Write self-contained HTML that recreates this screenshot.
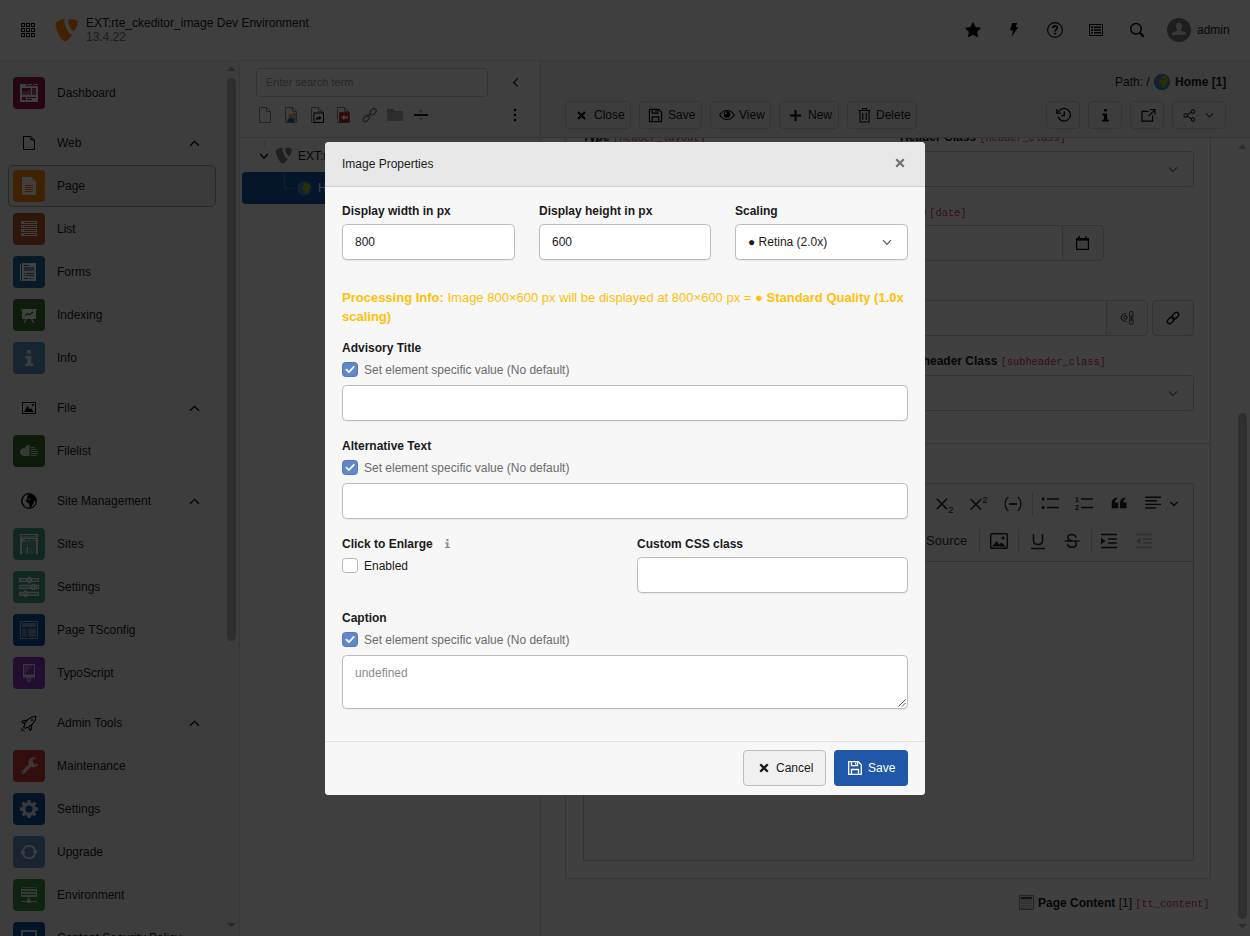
<!DOCTYPE html>
<html lang="en">
<head>
<meta charset="utf-8">
<title>TYPO3 Image Properties</title>
<style>
*{box-sizing:border-box;margin:0;padding:0}
html,body{width:1250px;height:936px;overflow:hidden;background:#fff}
body{font-family:"Liberation Sans",sans-serif;font-size:12px;color:#1a1a1a;line-height:1.5}
#app{position:relative;width:1250px;height:936px;overflow:hidden;background:#fff}
.abs{position:absolute}
svg{display:block}
/* ---------- topbar ---------- */
.topbar{position:absolute;left:0;top:0;width:1250px;height:61px;background:#fbfbfb;border-bottom:1px solid #e3e3e3}
.topbar .title{position:absolute;left:86px;top:16px;font-size:12px;line-height:14px;color:#1a1a1a}
.topbar .title span{display:block;color:#737373}
.tb-ic{position:absolute;top:22px;width:16px;height:16px}
/* ---------- sidebar ---------- */
.sidebar{position:absolute;left:0;top:61px;width:240px;height:875px;background:#f4f4f4;border-right:1px solid #d9d9d9}
.mod{position:absolute;left:13px;width:200px;height:32px}
.mod .ic{position:absolute;left:0;top:0;width:32px;height:32px;border-radius:4px}
.mod .ic svg{position:absolute;left:8px;top:8px;width:16px;height:16px}
.mod .lb{position:absolute;left:44px;top:7px;line-height:18px;font-size:12px;color:#1a1a1a;white-space:nowrap}
.grp .ic{background:none}
.mod.grp .ic svg{left:0;top:0}
.grp .chev{position:absolute;left:176px;top:11px;width:11px;height:11px}
.mod.active::before{content:"";box-sizing:border-box;position:absolute;left:-5px;top:-5px;width:207.5px;height:41.5px;border:1px solid #a0a0a0;border-radius:5px;background:#e9e9e9}
/* ---------- overlay ---------- */
.overlay{position:absolute;left:0;top:0;width:1250px;height:936px;background:rgba(0,0,0,.75)}
/* ---------- modal ---------- */
.modal{position:absolute;left:325px;top:142px;width:600px;height:653px;background:#f7f7f7;border-radius:4px;overflow:hidden}
.modal .mh{position:absolute;left:0;top:0;width:600px;height:45px;background:#e8e8e8;border-bottom:1px solid #d0d0d0}
.modal .mh .t{position:absolute;left:17px;top:13px;font-size:12px;line-height:18px;color:#1a1a1a}
.modal .mf{position:absolute;left:0;top:599px;width:600px;height:54px;border-top:1px solid #e3e3e3;background:#f7f7f7}
.lbl{position:absolute;font-weight:bold;font-size:12px;line-height:18px;color:#1a1a1a;white-space:nowrap}
.inp{position:absolute;height:35px;background:#fff;border:1px solid #bcbcbc;border-radius:4.5px;font-size:12px;line-height:33px;padding-left:12px;color:#1a1a1a;box-shadow:0 1px 1px rgba(0,0,0,.06)}
.cb{position:absolute;width:16px;height:15px;border-radius:3.5px}
.cb.on{background:#6189c9;border:1px solid #5179ba}
.cb.off{background:#fff;border:1px solid #b4b4b4}
.cbl{position:absolute;font-size:12px;line-height:18px;white-space:nowrap;color:#6b6b6b}
.pinfo{position:absolute;left:17px;top:146px;width:570px;font-size:13px;line-height:19px;color:#ffc107}
.btn-c{position:absolute;left:418px;top:8px;width:83px;height:36px;background:#f0f0f0;border:1px solid #bdbdbd;border-radius:4px;font-size:12px;color:#1a1a1a}
.btn-c span{position:absolute;left:32px;top:8px;line-height:18px}
.btn-s{position:absolute;left:509px;top:8px;width:74px;height:36px;background:#2057a8;border-radius:4px;font-size:12px;color:#fff}
.btn-s span{position:absolute;left:34px;top:9px;line-height:18px}
.dbtn{position:absolute;background:#f4f4f4;border:1px solid #d0d0d0;border-radius:4px;font-size:12px}
.flab{position:absolute;font-size:12px;line-height:18px;font-weight:bold;color:#1a1a1a;white-space:nowrap}
code{font-family:"Liberation Mono",monospace;font-size:10.3px;font-weight:normal;color:#d63384}
.fin{position:absolute;background:#fff;border:1px solid #ccc;border-radius:4px}
.fbtn{background:#f6f6f6}
</style>
</head>
<body>
<div id="app">

<!-- TOPBAR -->
<div class="topbar" id="topbar">
  <svg class="abs" style="left:21px;top:23px" width="14" height="14" viewBox="0 0 14 14" fill="none" stroke="#000" stroke-width="1"><rect x="0.5" y="0.5" width="3" height="3"/><rect x="5.5" y="0.5" width="3" height="3"/><rect x="10.5" y="0.5" width="3" height="3"/><rect x="0.5" y="5.5" width="3" height="3"/><rect x="5.5" y="5.5" width="3" height="3"/><rect x="10.5" y="5.5" width="3" height="3"/><rect x="0.5" y="10.5" width="3" height="3"/><rect x="5.5" y="10.5" width="3" height="3"/><rect x="10.5" y="10.5" width="3" height="3"/></svg>
  <svg class="abs" style="left:53.2px;top:16.8px" width="26.5" height="26.5" viewBox="0 0 16 16"><path fill="#FF8700" d="M11.6 10.385c-.2.06-.358.08-.567.08-1.708 0-4.217-5.970-4.217-7.957 0-.732.174-.976.418-1.185C5.143 1.566 2.634 2.333 1.832 3.310c-.174.244-.279.628-.279 1.115C1.553 7.528 4.865 14.570 7.2 14.570c1.082 0 2.905-1.778 4.4-4.185M10.512 1.430c2.161 0 4.325.349 4.325 1.569 0 2.475-1.569 5.474-2.371 5.474-1.429 0-3.207-3.974-3.207-5.962 0-.906.349-1.081 1.253-1.081"/></svg>
  <div class="title">EXT:rte_ckeditor_image Dev Environment<span>13.4.22</span></div>
  <!-- star -->
  <svg class="abs" style="left:965px;top:22px" width="16" height="16" viewBox="0 0 16 16"><path d="M8 1.2 L10.1 5.6 L14.9 6.2 L11.4 9.6 L12.3 14.4 L8 12 L3.7 14.4 L4.6 9.6 L1.1 6.2 L5.9 5.6 Z" fill="#000" stroke="#000" stroke-width="1.4" stroke-linejoin="round"/></svg>
  <!-- bolt -->
  <svg class="abs" style="left:1006px;top:22px" width="16" height="16" viewBox="0 0 16 16"><path d="M6.3 1 H11.2 L9.6 5.2 H12.3 L5.4 15 L7.2 8.6 H4 Z" fill="#000"/></svg>
  <!-- help -->
  <svg class="abs" style="left:1047px;top:22px" width="16" height="16" viewBox="0 0 16 16"><circle cx="8" cy="8" r="7.4" fill="none" stroke="#000" stroke-width="1.1"/><path d="M5.7 6.3 C5.7 4.9 6.7 4.1 8 4.1 C9.4 4.1 10.3 5 10.3 6.1 C10.3 7.6 8 7.8 8 9.6" fill="none" stroke="#000" stroke-width="1.6"/><rect x="7.1" y="10.7" width="1.8" height="1.8" fill="#000"/></svg>
  <!-- list -->
  <svg class="abs" style="left:1089px;top:24px" width="14" height="12" viewBox="0 0 14 12"><rect x=".5" y=".5" width="13" height="11" fill="none" stroke="#000" stroke-width="1"/><path d="M2 2.5h2v1.6h-2z M5 2.5h7v1.6h-7z M2 5.2h2v1.6h-2z M5 5.2h7v1.6h-7z M2 7.9h2v1.6h-2z M5 7.9h7v1.6h-7z" fill="#000"/></svg>
  <!-- search -->
  <svg class="abs" style="left:1129px;top:22px" width="16" height="16" viewBox="0 0 16 16"><circle cx="7" cy="6.8" r="5.3" fill="none" stroke="#000" stroke-width="1.5"/><path d="M10.9 10.8 L14.8 14.8" stroke="#000" stroke-width="2" /></svg>
  <!-- avatar -->
  <svg class="abs" style="left:1167px;top:18px" width="24" height="24" viewBox="0 0 24 24"><circle cx="12" cy="12" r="12" fill="#787878"/><path d="M12 4.6c-2 0-3.100 1.500-3.100 3.500 0 1.400.5 2.600 1.300 3.300v1.300l-3.900 1.400c-.7.300-1.200.9-1.300 1.700l-.2 1.200h14.400l-.2-1.200c-.1-.8-.6-1.400-1.300-1.700l-3.900-1.400v-1.300c.8-.7 1.300-1.900 1.300-3.300 0-2-1.100-3.500-3.100-3.500z" fill="#dcdcdc"/></svg>
  <div class="abs" style="left:1197px;top:21px;line-height:18px;font-size:12px;color:#1a1a1a">admin</div>
</div>

<!-- SIDEBAR -->
<div class="sidebar" id="sidebar">
<div class="mod" style="top:16px"><div class="ic" style="background:#96175a"><svg style="left:0;top:0;width:32px;height:32px" viewBox="0 0 32 32"><path d="M7 7h6v2h12v16H7z" fill="#fff"/><path d="M14 7h5v1h-5zM20 7h5v1h-5z" fill="#fff"/>
<path d="M9 11h9v7H9z M19 11h4v7h-4z M9 20h4v3H9z M14 20h9v1h-9z M14 22h5v1h-5z" fill="#96175a"/>
<path d="M9 18v-3l2-1 2 1 3-2 2-1v6z" fill="#fff" opacity=".35"/><path d="M19 12h4v6h-4z" fill="#fff" opacity=".25"/></svg></div><div class="lb">Dashboard</div></div>
<div class="mod grp" style="top:66px"><div class="ic" style="left:8px;top:8px;width:16px;height:16px"><svg width="16" height="16" viewBox="0 0 16 16"><path d="M2.5 1.500h7.500l3.5 3.500v9.500h-11z" fill="none" stroke="#000" stroke-width="1"/><path d="M10 1.500v3.500h3.5" fill="none" stroke="#000" stroke-width="1"/></svg></div><div class="lb">Web</div><svg class="chev" viewBox="0 0 11 11"><path d="M1 7.8 L5.5 3.3 L10 7.8" fill="none" stroke="#000" stroke-width="1.3"/></svg></div>
<div class="mod active" style="top:109px"><div class="ic" style="background:#ff8700"><svg style="left:0;top:0;width:32px;height:32px" viewBox="0 0 32 32"><path d="M9 7h10l4 4v14H9z" fill="#fff"/><path d="M19 7l4 4h-4z" fill="#ff8700" opacity=".45"/>
<path d="M12 15h8v1h-8zM12 17h8v1h-8zM12 19h8v1h-8zM12 21h8v1h-8z" fill="#ff8700"/></svg></div><div class="lb">Page</div></div>
<div class="mod" style="top:152px"><div class="ic" style="background:#c0562a"><svg style="left:0;top:0;width:32px;height:32px" viewBox="0 0 32 32"><path d="M8 8h16v3H8z" fill="#fff"/><path d="M9 9h1v1H9zM11 9h12v1H11z" fill="#c0562a"/><path d="M8 12h16v3H8z" fill="#fff"/><path d="M9 13h1v1H9zM11 13h12v1H11z" fill="#c0562a"/><path d="M8 16h16v3H8z" fill="#fff"/><path d="M9 17h1v1H9zM11 17h12v1H11z" fill="#c0562a"/><path d="M8 20h16v3H8z" fill="#fff"/><path d="M9 21h1v1H9zM11 21h12v1H11z" fill="#c0562a"/></svg></div><div class="lb">List</div></div>
<div class="mod" style="top:195px"><div class="ic" style="background:#23639c"><svg style="left:0;top:0;width:32px;height:32px" viewBox="0 0 32 32"><path d="M7 8h1v17H7z" fill="#fff"/><path d="M9 7h14v18H9z" fill="#fff"/>
<path d="M11 9h5v1h-5z M11 11h10v4H11z M11 17h1v1h-1z M13 17h8v1h-8z M11 19h1v1h-1z M13 19h8v1h-8z M11 22h4v1h-4z M16 22h4v1h-4z" fill="#23639c"/>
<path d="M11 11h10v4H11z M16 22h4v1h-4z" fill="#fff" opacity=".4"/></svg></div><div class="lb">Forms</div></div>
<div class="mod" style="top:238px"><div class="ic" style="background:#356f2f"><svg style="left:0;top:0;width:32px;height:32px" viewBox="0 0 32 32"><path d="M8 10h16v1.300H8z" fill="#fff"/><path d="M9 11h14v9H9z" fill="#fff"/>
<path d="M13.5 20 L11 24 M18.5 20 L21 24" stroke="#fff" stroke-width="1.2" fill="none"/>
<path d="M12 16.5 L14.5 14.5 L16.5 15.8 L20 13" stroke="#356f2f" stroke-width="1.1" fill="none"/></svg></div><div class="lb">Indexing</div></div>
<div class="mod" style="top:281px"><div class="ic" style="background:#5c94cc"><svg style="left:0;top:0;width:32px;height:32px" viewBox="0 0 32 32"><path d="M14 8h4v3.500h-4z M12.2 14h6v7.500h2v2.500h-8v-2.500h2v-5h-2z" fill="#fff" opacity=".85"/></svg></div><div class="lb">Info</div></div>
<div class="mod grp" style="top:331px"><div class="ic" style="left:8px;top:8px;width:16px;height:16px"><svg width="16" height="16" viewBox="0 0 16 16"><rect x="1.5" y="2.5" width="13" height="11" fill="none" stroke="#000" stroke-width="1"/><path d="M3 11.900L6.5 5.8 8.7 9.3 10.1 8.2 12.9 11.900z" fill="#000"/><rect x="11" y="4" width="1.8" height="1.8" fill="#000"/></svg></div><div class="lb">File</div><svg class="chev" viewBox="0 0 11 11"><path d="M1 7.8 L5.5 3.3 L10 7.8" fill="none" stroke="#000" stroke-width="1.3"/></svg></div>
<div class="mod" style="top:374px"><div class="ic" style="background:#3a6c2c"><svg style="left:0;top:0;width:32px;height:32px" viewBox="0 0 32 32"><path d="M16.5 9.800c-2.6 0-4.3 1.6-4.8 3.6-.3-.1-.6-.1-.9-.1-2.1 0-3.8 1.7-3.8 3.800s1.7 3.8 3.8 3.800h5.700z" fill="#fff" opacity=".8"/>
<path d="M17.6 12h4v1h-4z M17.6 14h6v1h-6z M17.6 16h7.500v1h-7.500z M17.6 18h7.500v1h-7.500z M17.6 20h6v1h-6z" fill="#fff" opacity=".8"/></svg></div><div class="lb">Filelist</div></div>
<div class="mod grp" style="top:424px"><div class="ic" style="left:8px;top:8px;width:16px;height:16px"><svg width="16" height="16" viewBox="0 0 16 16"><circle cx="8" cy="8" r="7.3" fill="none" stroke="#000" stroke-width="1.3"/><path d="M7.6 1.200C9.5 .9 12 1.5 13.3 3C14.6 4.5 15.2 6.3 14.9 8.300L13.6 7.400L12.6 10C11.8 11.5 10.8 12.6 10 15L8.6 14.800C8.4 12.6 8.4 11 7.4 10C6.2 9.8 4.9 9.2 5 7.700C5.1 6.5 6 5.7 7 5.300L6 4.800C6.2 3.4 6.6 2.2 7.6 1.200Z M1 5.500C1.5 4.3 2.6 4.2 2.5 5.200C2.3 6.2 1.8 7 1 7.500Z M1.3 9.600C1.8 10.6 3.3 11 3.5 12.600C2.6 12.8 1.7 11.8 1.3 9.600Z" fill="#000"/><ellipse cx="8.6" cy="6" rx="1.6" ry=".5" fill="#f4f4f4"/></svg></div><div class="lb">Site Management</div><svg class="chev" viewBox="0 0 11 11"><path d="M1 7.8 L5.5 3.3 L10 7.8" fill="none" stroke="#000" stroke-width="1.3"/></svg></div>
<div class="mod" style="top:467px"><div class="ic" style="background:#429c88"><svg style="left:0;top:0;width:32px;height:32px" viewBox="0 0 32 32"><g opacity=".95"><path d="M7.5 6.500h17v2.500h-17z" fill="none" stroke="#fff" stroke-width="1.1"/><rect x="22" y="7.2" width="1.2" height="1.2" fill="#fff"/>
<path d="M7 10h18v16h-2v-15h-14v15h-2z" fill="#fff"/><path d="M9 11.800h4v1.600h-4z M14.2 11.800h1.200v1.600h-1.200z M16.4 11.800h1.200v1.600h-1.200z M19.7 11.800h1.200v1.600h-1.200z M21.7 11.800h1.200v1.600h-1.200z" fill="#fff"/><path d="M13.8 18.500h1.200v7.500h-1.200z" fill="#fff"/></g>
<path d="M9.2 14h13.600v4h-13.600z M9.2 19h4.400v7h-4.400z M15.2 19h7.600v7h-7.600z" fill="#fff" opacity=".2"/></svg></div><div class="lb">Sites</div></div>
<div class="mod" style="top:510px"><div class="ic" style="background:#429c88"><svg style="left:0;top:0;width:32px;height:32px" viewBox="0 0 32 32"><g fill="#fff" fill-opacity=".3" stroke="#fff" stroke-width="1.2" stroke-opacity=".95"><path d="M6.5 7.500h7.500v3h-7.500z M18.5 7.500h7v3h-7z M15.3 6.300h2.100v5.100h-2.100z"/><path d="M6.5 14.300h11.300v3h-11.300z M22.9 14.300h2.600v3h-2.600z M19.2 13.300h2.300v5.200h-2.300z"/><path d="M6.5 21.300h3.500v3h-3.500z M14.6 21.300h10.900v3h-10.900z M11.3 20.200h2.100v5.200h-2.100z"/></g></svg></div><div class="lb">Settings</div></div>
<div class="mod" style="top:553px"><div class="ic" style="background:#104e9c"><svg style="left:0;top:0;width:32px;height:32px" viewBox="0 0 32 32"><path d="M7.5 7.500h17v17h-17z" fill="none" stroke="#fff" stroke-width="1" opacity=".62"/><path d="M9 9h14v4H9z" fill="#fff" opacity=".46"/><path d="M9 14.300h4.800v8.700H9z" fill="#fff" opacity=".3"/><path d="M15.2 14.300h7.800v8.700h-7.800z" fill="#fff" opacity=".4"/></svg></div><div class="lb">Page TSconfig</div></div>
<div class="mod" style="top:596px"><div class="ic" style="background:#8a34c4"><svg style="left:0;top:0;width:32px;height:32px" viewBox="0 0 32 32"><g opacity=".8"><path d="M10.5 7.500h11v10.500h-11z" fill="none" stroke="#fff" stroke-width="1"/><path d="M11.7 8v8.500h.9v-8.500z M13.5 8v7h.8v-7z M15.3 8v5h.7v-5z M17 8v3.500h.6v-3.500z M18.5 8v2h.6v-2z" fill="#fff" opacity=".8"/><path d="M10 18h12v2.700h-12z" fill="#fff"/><path d="M14.5 21.200h3v3h-3z" fill="none" stroke="#fff" stroke-width="1"/></g></svg></div><div class="lb">TypoScript</div></div>
<div class="mod grp" style="top:646px"><div class="ic" style="left:8px;top:8px;width:16px;height:16px"><svg width="16" height="16" viewBox="0 0 16 16"><g fill="none" stroke="#000" stroke-width="1.150" stroke-linejoin="round"><path d="M15 1.200C10.5 1.6 7.6 3.6 5.8 5.400L3.5 8.6 3.8 10.3 2.8 11.6 3.2 12.8 4.6 13.2 5.9 12.3 7.4 12.5 10.6 9.800C12.6 8 14.6 5.3 15 1.200Z"/><path d="M5.8 5.400L2 5.8.6 7.1 3.3 8.6"/><path d="M10.6 9.800L10.4 14 9 15.3 7.4 12.5"/></g><circle cx="11" cy="5" r=".95" fill="#000"/><path d="M0 13h1.100v1.100H0zM1.2 14.100h1.100v1.100H1.200zM0 15.100h1.100v.9H0zM2.3 15.100h1.100v.9H2.300z" fill="#000"/></svg></div><div class="lb">Admin Tools</div><svg class="chev" viewBox="0 0 11 11"><path d="M1 7.8 L5.5 3.3 L10 7.8" fill="none" stroke="#000" stroke-width="1.3"/></svg></div>
<div class="mod" style="top:689px"><div class="ic" style="background:#c83838"><svg style="left:0;top:0;width:32px;height:32px" viewBox="0 0 32 32"><g opacity=".8"><path d="M10.2 22.300L17.4 15.1" stroke="#fff" stroke-width="3.6" stroke-linecap="round" fill="none"/><path d="M23.8 8.600a5 5 0 1 0 1.5 4.800l-3.3 1-2.5-2.4.9-3.200z" fill="#fff"/></g><circle cx="10.3" cy="22.2" r=".8" fill="#c83838"/></svg></div><div class="lb">Maintenance</div></div>
<div class="mod" style="top:732px"><div class="ic" style="background:#104c94"><svg style="left:0;top:0;width:32px;height:32px" viewBox="0 0 32 32"><g opacity=".85"><rect x="14.3" y="7" width="3.4" height="4" transform="rotate(0 16 16)" fill="#fff"/><rect x="14.3" y="7" width="3.4" height="4" transform="rotate(45 16 16)" fill="#fff"/><rect x="14.3" y="7" width="3.4" height="4" transform="rotate(90 16 16)" fill="#fff"/><rect x="14.3" y="7" width="3.4" height="4" transform="rotate(135 16 16)" fill="#fff"/><rect x="14.3" y="7" width="3.4" height="4" transform="rotate(180 16 16)" fill="#fff"/><rect x="14.3" y="7" width="3.4" height="4" transform="rotate(225 16 16)" fill="#fff"/><rect x="14.3" y="7" width="3.4" height="4" transform="rotate(270 16 16)" fill="#fff"/><rect x="14.3" y="7" width="3.4" height="4" transform="rotate(315 16 16)" fill="#fff"/><circle cx="16" cy="16" r="5.2" fill="none" stroke="#fff" stroke-width="3.4"/></g></svg></div><div class="lb">Settings</div></div>
<div class="mod" style="top:775px"><div class="ic" style="background:#658fc8"><svg style="left:0;top:0;width:32px;height:32px" viewBox="0 0 32 32"><g opacity=".95"><path d="M10.2 13.900A6.2 6.2 0 0 1 22.1 14.9" fill="none" stroke="#fff" stroke-width="1.9"/><path d="M19.4 14.600h5.600l-2.8 4.200z" fill="#fff"/><path d="M21.8 18.100A6.2 6.2 0 0 1 9.9 17.1" fill="none" stroke="#fff" stroke-width="1.9"/><path d="M7 17.400h5.600l-2.8-4.200z" fill="#fff"/></g></svg></div><div class="lb">Upgrade</div></div>
<div class="mod" style="top:818px"><div class="ic" style="background:#388a44"><svg style="left:0;top:0;width:32px;height:32px" viewBox="0 0 32 32"><path d="M9 8h14v1H9z" fill="#fff" opacity=".5"/><path d="M8 10h16v8H8z" fill="#fff" opacity=".8"/><path d="M9 12h14v1H9z M9 15h14v1H9z" fill="#388a44"/><path d="M15.5 18v3 M8 22.500h16" stroke="#fff" stroke-width="1.2" opacity=".8"/><path d="M14 20.500h4v3.500h-4z" fill="#fff" opacity=".8"/></svg></div><div class="lb">Environment</div></div>
<div class="mod" style="top:861px"><div class="ic" style="background:#104c94"><svg style="left:0;top:0;width:32px;height:32px" viewBox="0 0 32 32"><path d="M9 9h14v14H9z" fill="none" stroke="#fff" stroke-width="2" opacity=".8"/></svg></div><div class="lb">Content Security Policy</div></div>
<div class="abs" style="left:227px;top:17px;width:9px;height:563px;background:#b8b8b8;border-radius:5px"></div>
<svg class="abs" style="left:227px;top:5px" width="9" height="5" viewBox="0 0 9 5"><path d="M0 5L4.5 .5 9 5z" fill="#a6a6a6"/></svg>
<svg class="abs" style="left:227px;top:862px" width="9" height="5" viewBox="0 0 9 5"><path d="M0 0L4.5 4.5 9 0z" fill="#a6a6a6"/></svg>
</div>

<!-- TREE -->
<div id="tree">
  <div class="abs" style="left:240px;top:61px;width:300px;height:875px;background:#f9f9f9"></div>
  <div class="abs" style="left:256px;top:68px;width:232px;height:29px;background:#fff;border:1px solid #ccc;border-radius:4px;padding-left:9px;line-height:27px;color:#9a9a9a;font-size:11px">Enter search term</div>
  <svg class="abs" style="left:512px;top:77px" width="8" height="11" viewBox="0 0 8 11"><path d="M5.800 1.300 L1.600 5.500 L5.800 9.700" fill="none" stroke="#000" stroke-width="1.100"/></svg>
  <!-- toolbar icons -->
  <svg class="abs" style="left:257px;top:107px" width="16" height="16" viewBox="0 0 16 16"><path d="M2.500 .500h7l4 4v11h-11z" fill="#fff" stroke="#8c8c8c" stroke-width="1"/><path d="M9.500 .500v4h4" fill="none" stroke="#8c8c8c" stroke-width="1"/></svg>
  <svg class="abs" style="left:283px;top:107px" width="16" height="16" viewBox="0 0 16 16"><path d="M2.500 .500h7l4 4v11h-11z" fill="#fff" stroke="#8c8c8c" stroke-width="1"/><path d="M9.500 .500v4h4" fill="none" stroke="#8c8c8c" stroke-width="1"/><circle cx="11.300" cy="7.200" r="1.700" fill="#e8a33a"/><path d="M9.500 14.600v-3.200c0-1.400.8-2.200 2-2.200s2.600.8 2.900 2.400v3z" fill="#8fb0d6"/><circle cx="7.600" cy="9" r="2" fill="#f0a020"/><path d="M4.300 15.500v-2c0-1.700 1.400-2.700 3.300-2.700s3.400 1 3.400 2.700v2z" fill="#2f6ab4"/></svg>
  <svg class="abs" style="left:309px;top:107px" width="16" height="16" viewBox="0 0 16 16"><path d="M2.500 .500h7l4 4v11h-11z" fill="#fff" stroke="#8c8c8c" stroke-width="1"/><path d="M9.500 .500v4h4" fill="none" stroke="#8c8c8c" stroke-width="1"/><rect x="5" y="6" width="9.500" height="9.500" fill="#fff" stroke="#000" stroke-width="1"/><path d="M7.300 13.300v-1.500c0-1 .7-1.600 1.700-1.600h.9v-1.400l2.700 2.200-2.700 2.200v-1.400h-.9c-.4 0-.6.200-.6.600v.900z" fill="#000"/></svg>
  <svg class="abs" style="left:335px;top:107px" width="16" height="16" viewBox="0 0 16 16"><path d="M2.500 .500h7l4 4v11h-11z" fill="#fff" stroke="#8c8c8c" stroke-width="1"/><path d="M9.500 .500v4h4" fill="none" stroke="#8c8c8c" stroke-width="1"/><rect x="4.200" y="5.200" width="10.600" height="10.400" fill="#c42020"/><path d="M6 10.400l3.400-2.900v1.900h3.600v2h-3.600v1.900z" fill="#fff"/></svg>
  <svg class="abs" style="left:361px;top:107px" width="16" height="16" viewBox="0 0 16 16"><g fill="none" stroke="#808080" stroke-width="1.400"><rect x="7.300" y="1.200" width="7" height="4.600" rx="2.300" transform="rotate(-45 10.800 3.500) translate(0 1.800)"/><rect x="1.600" y="9" width="7" height="4.600" rx="2.300" transform="rotate(-45 5.100 11.300) translate(0 .2)"/><path d="M6 10l4-4"/></g></svg>
  <svg class="abs" style="left:387px;top:107px" width="16" height="16" viewBox="0 0 16 16"><path d="M0 2h6.500l1 2h8.500v10h-16z" fill="#a0a0a0"/><path d="M0 4.600h16v9.400h-16z" fill="#b4b4b4"/></svg>
  <svg class="abs" style="left:413px;top:107px" width="16" height="16" viewBox="0 0 16 16"><path d="M1 7h14v2h-14z" fill="#1a1a1a"/><path d="M8 2.300l2.400 2.900h-4.800z M8 13.700l2.400-2.900h-4.800z" fill="#b0b0b0"/></svg>
  <svg class="abs" style="left:513px;top:108px" width="4" height="14" viewBox="0 0 4 14"><rect x=".9" y=".9" width="2.200" height="2.200" fill="#000"/><rect x=".9" y="5.900" width="2.200" height="2.200" fill="#000"/><rect x=".9" y="10.900" width="2.200" height="2.200" fill="#000"/></svg>
  <div class="abs" style="left:240px;top:137px;width:300px;height:1px;background:#d4d4d4"></div>
  <div class="abs" style="left:540px;top:61px;width:1px;height:875px;background:#d4d4d4"></div>
  <!-- row 1 -->
  <div class="abs" style="left:264px;top:140px;width:1px;height:8px;background:#dcdcdc"></div>
  <svg class="abs" style="left:259px;top:152px" width="10" height="8" viewBox="0 0 10 8"><path d="M1.200 2 L5 6 L8.800 2" fill="none" stroke="#000" stroke-width="1.300"/></svg>
  <svg class="abs" style="left:274.300px;top:146.100px" width="19.300" height="19.300" viewBox="0 0 16 16"><path fill="#7f7f7f" d="M11.6 10.385c-.2.06-.358.08-.567.08-1.708 0-4.217-5.970-4.217-7.957 0-.732.174-.976.418-1.185C5.143 1.566 2.634 2.333 1.832 3.310c-.174.244-.279.628-.279 1.115C1.553 7.528 4.865 14.570 7.2 14.570c1.082 0 2.905-1.778 4.4-4.185M10.512 1.430c2.161 0 4.325.349 4.325 1.569 0 2.475-1.569 5.474-2.371 5.474-1.429 0-3.207-3.974-3.207-5.962 0-.906.349-1.081 1.253-1.081"/></svg>
  <div class="abs" style="left:298px;top:147px;line-height:18px;font-size:12px;color:#1a1a1a;white-space:nowrap">EXT:rte_ckeditor_image Dev Environment</div>
  <!-- row 2 selected -->
  <div class="abs" style="left:242px;top:172px;width:296px;height:32px;background:#1458ac;border-radius:4px"></div>
  <div class="abs" style="left:284px;top:172px;width:1px;height:17px;background:rgba(255,255,255,.18)"></div>
  <div class="abs" style="left:284px;top:188px;width:10px;height:1px;background:rgba(255,255,255,.18)"></div>
  <svg class="abs" style="left:296.500px;top:180.500px" width="15" height="15" viewBox="0 0 16 16"><circle cx="8" cy="8" r="8" fill="#3a68bc"/><circle cx="8" cy="8" r="7" fill="#4a7cd4"/><path d="M8.300 2.200C9.500 1.500 11.500 1.800 12.500 3C13.800 4.300 14.800 6.300 14.600 8.200L13.600 7.400L12.800 9.600C12 11 11 12 10.300 13.800C9.800 14.600 9 14.400 8.600 13.600C8.200 12.200 8.600 10.800 7.600 9.800C6.400 9.600 4.800 9.200 4.900 7.700C5 6.500 6.200 5.800 7.200 5.500L6.600 4.800C7 3.800 7.400 3 8.300 2.200Z M1.300 5.200C1.800 4.200 2.900 4.200 2.700 5.200C2.500 6.200 2 7 1.200 7.400Z M1.600 9.600C2 10.600 3.600 11 3.800 12.400C3 12.800 2 11.800 1.600 9.600Z" fill="#a8c000"/><circle cx="4.300" cy="2.600" r=".55" fill="#a8c000"/><ellipse cx="8.700" cy="5.600" rx="1.400" ry=".55" fill="#4a7cd4"/></svg>
  <div class="abs" style="left:318px;top:179px;line-height:18px;font-size:12px;color:#fff">Home</div>
</div>

<!-- CONTENT -->
<div id="content">
  <!-- docheader -->
  <div class="abs" style="left:541px;top:61px;width:709px;height:76px;background:#f2f2f2"></div>
  <div class="abs" style="left:541px;top:137px;width:709px;height:1px;background:#d0d0d0"></div>
  <div class="abs" style="left:1115px;top:73px;line-height:18px;font-size:12px;color:#1a1a1a;white-space:nowrap">Path: /</div>
  <svg class="abs" style="left:1154px;top:74px" width="16" height="16" viewBox="0 0 16 16"><circle cx="8" cy="8" r="8" fill="#3a68bc"/><circle cx="8" cy="8" r="7" fill="#4a7cd4"/><path d="M8.3 2.200C9.5 1.5 11.5 1.8 12.5 3C13.8 4.3 14.8 6.3 14.6 8.200L13.6 7.400L12.8 9.600C12 11 11 12 10.3 13.800C9.8 14.6 9 14.4 8.6 13.600C8.2 12.2 8.6 10.8 7.6 9.800C6.4 9.6 4.8 9.2 4.9 7.700C5 6.5 6.2 5.8 7.2 5.500L6.6 4.800C7 3.8 7.4 3 8.3 2.200Z M1.3 5.200C1.8 4.2 2.9 4.2 2.7 5.200C2.5 6.2 2 7 1.2 7.400Z M1.6 9.600C2 10.6 3.6 11 3.8 12.400C3 12.8 2 11.8 1.6 9.600Z" fill="#a8c000"/><circle cx="4.3" cy="2.6" r=".55" fill="#a8c000"/><ellipse cx="8.7" cy="5.6" rx="1.4" ry=".55" fill="#4a7cd4"/></svg>
  <div class="abs" style="left:1175px;top:73px;line-height:18px;font-size:12px;font-weight:bold;color:#1a1a1a;white-space:nowrap">Home [1]</div>
  <div class="dbtn" style="left:565px;top:101px;width:66px;height:27.5px"><svg class="abs" style="left:11px;top:8.500px" width="9" height="9" viewBox="0 0 9 9"><path d="M1 1L8 8M8 1L1 8" stroke="#000" stroke-width="2.1" fill="none"/></svg><span class="abs" style="left:28px;top:4px;line-height:18px;color:#1a1a1a">Close</span></div>
  <div class="dbtn" style="left:639px;top:101px;width:63px;height:27.5px"><svg class="abs" style="left:8px;top:5.500px" width="15" height="15" viewBox="0 0 16 16"><path d="M1.5 1.500H11.500L14.5 4.500V14.500H1.500Z" fill="none" stroke="#000" stroke-width="1.2"/><path d="M4.5 1.500V5.500H10.500V1.5" fill="none" stroke="#000" stroke-width="1.2"/><path d="M8.5 2.500V4.5" stroke="#000" stroke-width="1.2"/><path d="M4.5 14.500V9.500H11.500V14.5" fill="none" stroke="#000" stroke-width="1.2"/></svg><span class="abs" style="left:28px;top:4px;line-height:18px;color:#1a1a1a">Save</span></div>
  <div class="dbtn" style="left:710px;top:101px;width:61px;height:27.5px"><svg class="abs" style="left:8px;top:6px" width="16" height="14" viewBox="0 0 16 14"><path d="M.8 7C2.5 4 5 2.5 8 2.500S13.5 4 15.2 7C13.5 10 11 11.5 8 11.500S2.5 10 .8 7z" fill="none" stroke="#000" stroke-width="1.2"/><circle cx="8" cy="6.5" r="3.3" fill="#000"/><circle cx="6.8" cy="5.3" r="1.1" fill="#fff"/></svg><span class="abs" style="left:28px;top:4px;line-height:18px;color:#1a1a1a">View</span></div>
  <div class="dbtn" style="left:779px;top:101px;width:60px;height:27.5px"><svg class="abs" style="left:10px;top:8px" width="11" height="11" viewBox="0 0 11 11"><path d="M5.5 0V11M0 5.500H11" stroke="#000" stroke-width="2"/></svg><span class="abs" style="left:28px;top:4px;line-height:18px;color:#1a1a1a">New</span></div>
  <div class="dbtn" style="left:847px;top:101px;width:70px;height:27.5px"><svg class="abs" style="left:10px;top:5px" width="13" height="16" viewBox="0 0 13 16"><path d="M.5 3.500h12M4.5 3.500v-2h4v2M2 3.500v11.500h9v-11.5" fill="none" stroke="#000" stroke-width="1.1"/><path d="M4.8 6v7M8.2 6v7" stroke="#000" stroke-width="1.1"/></svg><span class="abs" style="left:28px;top:4px;line-height:18px;color:#1a1a1a">Delete</span></div>
  <div class="dbtn" style="left:1046px;top:101px;width:34px;height:27.5px"><svg class="abs" style="left:9px;top:5px" width="16" height="16" viewBox="0 0 16 16"><path d="M2.3 5.200A6.3 6.3 0 1 1 2 9.5" fill="none" stroke="#000" stroke-width="1.3"/><path d="M.8 2v4.200h4.2" fill="none" stroke="#000" stroke-width="1.3"/><path d="M8.3 4.500v4h-2.8" fill="none" stroke="#000" stroke-width="1.3"/></svg></div>
  <div class="dbtn" style="left:1088px;top:101px;width:34px;height:27.5px"><svg class="abs" style="left:13px;top:7px" width="7" height="13" viewBox="0 0 7 13"><path d="M2 0h3v2.600h-3zM.5 4.500h4.700v6.200h1.600v1.900h-6.800v-1.900h1.900v-4.300h-1.400z" fill="#000"/></svg></div>
  <div class="dbtn" style="left:1130px;top:101px;width:34px;height:27.5px"><svg class="abs" style="left:9.500px;top:6.500px" width="15" height="13" viewBox="0 0 16 14"><path d="M8 2.500h-7v10.500h11.500v-6" fill="none" stroke="#000" stroke-width="1.2"/><path d="M9.5 .6h5.500v5.500M15 .6l-7 7" fill="none" stroke="#000" stroke-width="1.2"/></svg></div>
  <div class="dbtn" style="left:1172px;top:101px;width:54px;height:27.5px"><svg class="abs" style="left:10px;top:7px" width="13" height="13" viewBox="0 0 13 13"><g fill="none" stroke="#000" stroke-width="1"><circle cx="10" cy="2.5" r="1.8"/><circle cx="2.7" cy="6.5" r="1.8"/><circle cx="10" cy="10.5" r="1.8"/><path d="M4.3 5.600l4.1-2.300M4.3 7.400l4.1 2.3"/></g></svg><svg class="abs" style="left:31.500px;top:10px" width="9" height="7" viewBox="0 0 9 7"><path d="M1 1.500L4.5 5 8 1.5" fill="none" stroke="#555" stroke-width="1.1"/></svg></div>
  <!-- panel -->
  <div class="abs" style="left:565px;top:100px;width:646px;height:779px;border:1px solid #d4d4d4;background:#fdfdfd;clip-path:inset(38px 0 0 0)"></div>
  <div class="abs" style="left:565px;top:443px;width:646px;height:1px;background:#d4d4d4"></div>
  <div class="abs" style="left:541px;top:138px;width:709px;height:20px;overflow:hidden">
    <div class="flab" style="left:41.500px;top:-10px">Type <code>[header_layout]</code></div>
    <div class="flab" style="left:359px;top:-10px">Header Class <code>[header_class]</code></div>
  </div>
  <div class="fin" style="left:900px;top:151px;width:294px;height:36px"><svg class="abs" style="right:15.500px;top:14px" width="10" height="7" viewBox="0 0 10 7"><path d="M1 1.500L5 5.5 9 1.5" fill="none" stroke="#7a7a7a" stroke-width="1.1"/></svg></div>
  <div class="flab" style="left:900px;top:203px">Date <code>[date]</code></div>
  <div class="fin" style="left:900px;top:225px;width:163px;height:36px;border-radius:4px 0 0 4px"></div>
  <div class="fin fbtn" style="left:1062px;top:225px;width:42px;height:36px;border-radius:0 4px 4px 0"><svg class="abs" style="left:13px;top:9.500px" width="13" height="14" viewBox="0 0 13 14"><path d="M.6 2.600h11.800v10.800h-11.800z" fill="none" stroke="#000" stroke-width="1.2"/><path d="M.6 2.600h11.800v2h-11.800z" fill="#000"/><path d="M3 .3v3M10 .3v3" stroke="#000" stroke-width="1.6"/></svg></div>
  <div class="fin" style="left:583px;top:300px;width:524px;height:36px;border-radius:4px 0 0 4px"></div>
  <div class="fin fbtn" style="left:1106px;top:300px;width:42px;height:36px;border-radius:0 4px 4px 0"><svg class="abs" style="left:13px;top:9px" width="15" height="16" viewBox="0 0 15 16"><g fill="none" stroke="#555" stroke-width="1.1"><path d="M6.5 3.500c-3 0-5 2-5.5 4.5 1 2 2.8 3.5 5.5 3.5"/><circle cx="5.5" cy="7.5" r="1.6"/><rect x="9.5" y="1.5" width="3.6" height="6" rx="1.8"/><rect x="9.5" y="8.5" width="3.6" height="6" rx="1.8"/><path d="M11.3 5v6"/></g></svg></div>
  <div class="fin fbtn" style="left:1152px;top:300px;width:42px;height:36px"><svg class="abs" style="left:13px;top:10px" width="14" height="14" viewBox="0 0 14 14"><g fill="none" stroke="#000" stroke-width="1.3"><rect x="5.4" y="2.4" width="7.8" height="4.6" rx="2.3" transform="rotate(-45 9.3 4.7)"/><rect x=".8" y="7" width="7.8" height="4.6" rx="2.3" transform="rotate(-45 4.7 9.3)"/></g></svg></div>
  <div class="flab" style="left:900px;top:352px">Subheader Class <code>[subheader_class]</code></div>
  <div class="fin" style="left:900px;top:375px;width:294px;height:36px"><svg class="abs" style="right:15.500px;top:14px" width="10" height="7" viewBox="0 0 10 7"><path d="M1 1.500L5 5.5 9 1.5" fill="none" stroke="#7a7a7a" stroke-width="1.1"/></svg></div>
  <!-- ckeditor -->
  <div class="abs" style="left:583px;top:483px;width:611px;height:378px;border:1px solid #ccc;background:#fff"></div>
  <div class="abs" style="left:584px;top:484px;width:609px;height:78px;background:#fafafa;border-bottom:1px solid #ccc"></div>
  <svg class="abs" style="left:935px;top:494px" width="20" height="20" viewBox="0 0 20 20"><path d="M1.7 4.800l10.3 10.300M12 4.800l-10.3 10.3" stroke="#222" stroke-width="1.5" fill="none"/><text x="13.2" y="19" font-family="Liberation Sans" font-size="9.5" fill="#222">2</text></svg><svg class="abs" style="left:969px;top:494px" width="20" height="20" viewBox="0 0 20 20"><path d="M1.7 5.300l10.3 10.300M12 5.300l-10.3 10.3" stroke="#222" stroke-width="1.5" fill="none"/><text x="13.2" y="9" font-family="Liberation Sans" font-size="9.5" fill="#222">2</text></svg><svg class="abs" style="left:1003px;top:494px" width="20" height="20" viewBox="0 0 20 20"><path d="M5.3 3c-4.3 3.5-4.3 10.5 0 14M14.7 3c4.3 3.5 4.3 10.5 0 14" stroke="#222" stroke-width="1.2" fill="none"/><path d="M6 10h8" stroke="#222" stroke-width="1.8"/></svg><div class="abs" style="left:1032px;top:492px;width:1px;height:24px;background:#ccc"></div><svg class="abs" style="left:1040px;top:494px" width="20" height="20" viewBox="0 0 20 20"><circle cx="3.2" cy="5" r="1.5" fill="#222"/><circle cx="3.2" cy="13.5" r="1.5" fill="#222"/><path d="M7 5h12M7 13.500h12" stroke="#222" stroke-width="1.5"/></svg><svg class="abs" style="left:1074px;top:494px" width="20" height="20" viewBox="0 0 20 20"><path d="M7 5h12M7 13.500h12" stroke="#222" stroke-width="1.5"/><text x="1" y="7.5" font-family="Liberation Sans" font-size="7" font-weight="bold" fill="#222">1</text><text x="1" y="16.3" font-family="Liberation Sans" font-size="7" font-weight="bold" fill="#222">2</text></svg><svg class="abs" style="left:1109px;top:494px" width="20" height="20" viewBox="0 0 20 20"><path d="M2.7 14.200000000000001V8.9C2.7 5.9 4.5 4.0 7.7 3.4L8.3 5.0C6.7 5.6 5.9 6.8 5.800000000000001 8.4H9.2V14.200000000000001Z M11 14.200000000000001V8.9C11 5.9 12.8 4.0 16 3.4L16.6 5.0C15 5.6 14.2 6.8 14.1 8.4H17.5V14.200000000000001Z" fill="#222"/></svg><svg class="abs" style="left:1143px;top:494px" width="20" height="20" viewBox="0 0 20 20"><path d="M2.3 3.200h15.700M2.3 6.800h11.700M2.3 10.400h15.700M2.3 14h10.7" stroke="#222" stroke-width="1.4"/></svg><svg class="abs" style="left:1169px;top:499px" width="10" height="10" viewBox="0 0 10 10"><path d="M1.5 3L5 6.5 8.5 3" stroke="#222" stroke-width="1.4" fill="none"/></svg>
  <div class="abs" style="left:926px;top:531px;line-height:20px;font-size:13px;color:#333">Source</div>
  <div class="abs" style="left:979px;top:529px;width:1px;height:24px;background:#ccc"></div><svg class="abs" style="left:989px;top:531px" width="20" height="20" viewBox="0 0 20 20"><rect x="1.7" y="2.7" width="16.6" height="14.6" rx="1" fill="none" stroke="#222" stroke-width="1.4"/><path d="M3 15.500l4.5-5.5 3 3.5 2-2 4.5 4z" fill="#222"/><circle cx="14" cy="7" r="1.6" fill="#222"/></svg><div class="abs" style="left:1018px;top:529px;width:1px;height:24px;background:#ccc"></div><svg class="abs" style="left:1028px;top:531px" width="20" height="20" viewBox="0 0 20 20"><path d="M5.5 3v6.500c0 2.5 1.8 4 4.5 4s4.5-1.5 4.5-4V3" stroke="#222" stroke-width="1.5" fill="none"/><path d="M3 17.500h14" stroke="#222" stroke-width="1.4"/></svg><svg class="abs" style="left:1062px;top:531px" width="20" height="20" viewBox="0 0 20 20"><path d="M14 6.500c-.5-2-2-3-4.2-3-2.5 0-4 1.3-4 3 0 1.5 1 2.5 4.2 3.500M5.5 13c.5 2.2 2.2 3.3 4.6 3.3 2.6 0 4.2-1.3 4.2-3.2 0-1.3-.6-2.1-1.8-2.7" stroke="#222" stroke-width="1.5" fill="none"/><path d="M2.5 10h15" stroke="#222" stroke-width="1.3"/></svg><div class="abs" style="left:1091px;top:529px;width:1px;height:24px;background:#ccc"></div><svg class="abs" style="left:1099px;top:531px" width="20" height="20" viewBox="0 0 20 20"><path d="M2 3.500h16M9 8h9M9 12h9M2 16.500h16" stroke="#222" stroke-width="1.4"/><path d="M2 6.800l4.5 3.200L2 13.200z" fill="#222"/></svg><svg class="abs" style="left:1134px;top:531px" width="20" height="20" viewBox="0 0 20 20"><g opacity=".3"><path d="M2 3.500h16M9 8h9M9 12h9M2 16.500h16" stroke="#222" stroke-width="1.4"/><path d="M6.5 6.800L2 10l4.5 3.200z" fill="#222"/></g></svg>
  <!-- footer -->
  <svg class="abs" style="left:1019px;top:895px" width="15" height="15" viewBox="0 0 16 16"><rect x=".5" y=".5" width="15" height="15" fill="#f4f4f4" stroke="#8a8a8a"/><path d="M2 2h12v2.500h-12z" fill="#555"/><path d="M2 6.500h12M2 9h12M2 11.500h12M2 14h12" stroke="#b0b0b0" stroke-width="1"/></svg>
  <div class="abs" style="left:1038px;top:894px;line-height:18px;font-size:12px;color:#1a1a1a;white-space:nowrap"><b>Page Content</b> [1] <code>[tt_content]</code></div>
  <!-- scrollbar -->
  <svg class="abs" style="left:1238px;top:144px" width="9" height="5" viewBox="0 0 9 5"><path d="M0 5L4.5 .3 9 5z" fill="#b4b4b4"/></svg>
  <div class="abs" style="left:1238px;top:413px;width:9px;height:506px;background:#bcbcbc;border-radius:5px"></div>
  <svg class="abs" style="left:1238px;top:924px" width="9" height="5" viewBox="0 0 9 5"><path d="M0 0L4.5 4.7 9 0z" fill="#b4b4b4"/></svg>
</div>

<div class="overlay"></div>

<!-- MODAL -->
<div class="modal" id="modal">
  <div class="mh"><div class="t">Image Properties</div>
    <svg class="abs" style="left:570px;top:16px" width="10" height="10" viewBox="0 0 10 10"><path d="M1.2 1.2 L8.8 8.8 M8.8 1.2 L1.2 8.8" stroke="#6f6f6f" stroke-width="2.1" fill="none"/></svg>
  </div>

  <!-- row 1 -->
  <div class="lbl" style="left:17px;top:60px">Display width in px</div>
  <div class="lbl" style="left:214px;top:60px">Display height in px</div>
  <div class="lbl" style="left:410px;top:60px">Scaling</div>
  <div class="inp" style="left:17px;top:82px;width:173px;height:36px;line-height:34px">800</div>
  <div class="inp" style="left:214px;top:82px;width:172px;height:36px;line-height:34px">600</div>
  <div class="inp" style="left:410px;top:82px;width:173px;height:36px;line-height:34px">● Retina (2.0x)
    <svg class="abs" style="left:146px;top:14px" width="10" height="7" viewBox="0 0 10 7"><path d="M1 1.2 L5 5.4 L9 1.2" stroke="#555" stroke-width="1.1" fill="none"/></svg>
  </div>

  <!-- processing info -->
  <div class="pinfo"><b>Processing Info:</b> Image 800×600 px will be displayed at 800×600 px = <b>● Standard Quality (1.0x scaling)</b></div>

  <!-- advisory title -->
  <div class="lbl" style="left:17px;top:197px">Advisory Title</div>
  <div class="cb on" style="left:17px;top:220px"><svg width="14" height="13" viewBox="0 0 14 13"><path d="M3.4 6.6 L5.9 9.1 L10.8 3.9" stroke="#fff" stroke-width="1.7" fill="none" stroke-linecap="round" stroke-linejoin="round"/></svg></div>
  <div class="cbl" style="left:39px;top:219px">Set element specific value (No default)</div>
  <div class="inp" style="left:17px;top:243px;width:566px;height:36px"></div>

  <!-- alternative text -->
  <div class="lbl" style="left:17px;top:295px">Alternative Text</div>
  <div class="cb on" style="left:17px;top:318px"><svg width="14" height="13" viewBox="0 0 14 13"><path d="M3.4 6.6 L5.9 9.1 L10.8 3.9" stroke="#fff" stroke-width="1.7" fill="none" stroke-linecap="round" stroke-linejoin="round"/></svg></div>
  <div class="cbl" style="left:39px;top:317px">Set element specific value (No default)</div>
  <div class="inp" style="left:17px;top:341px;width:566px;height:36px"></div>

  <!-- click to enlarge / css class -->
  <div class="lbl" style="left:17px;top:393px">Click to Enlarge</div>
  <svg class="abs" style="left:119.5px;top:397px" width="5" height="9.4" viewBox="0 0 5 9.4"><path d="M1.3 0 H3.5 V2 H1.3 Z M0.3 3.2 H3.5 V8.1 H5 V9.4 H0 V8.1 H1.4 V4.5 H0.3 Z" fill="#8c8c8c"/></svg>
  <div class="cb off" style="left:17px;top:416px"></div>
  <div class="cbl" style="left:39px;top:415px;color:#1a1a1a">Enabled</div>
  <div class="lbl" style="left:312px;top:393px">Custom CSS class</div>
  <div class="inp" style="left:312px;top:415px;width:271px;height:36px"></div>

  <!-- caption -->
  <div class="lbl" style="left:17px;top:467px">Caption</div>
  <div class="cb on" style="left:17px;top:490px"><svg width="14" height="13" viewBox="0 0 14 13"><path d="M3.4 6.6 L5.9 9.1 L10.8 3.9" stroke="#fff" stroke-width="1.7" fill="none" stroke-linecap="round" stroke-linejoin="round"/></svg></div>
  <div class="cbl" style="left:39px;top:489px">Set element specific value (No default)</div>
  <div class="inp" style="left:17px;top:513px;width:566px;height:54px;line-height:18px;padding-top:8px;color:#8c8c8c">undefined
    <svg class="abs" style="right:1px;bottom:1px" width="9" height="9" viewBox="0 0 9 9"><path d="M8.500 1.500 L1.500 8.500 M8.500 5 L5 8.500" stroke="#555" stroke-width="1" fill="none"/></svg>
  </div>

  <div class="mf">
    <div class="btn-c"><svg class="abs" style="left:14.500px;top:11.500px" width="10" height="10" viewBox="0 0 10 10"><path d="M1.200 1.200 L8.800 8.800 M8.800 1.200 L1.200 8.800" stroke="#1a1a1a" stroke-width="2.300" fill="none"/></svg><span>Cancel</span></div>
    <div class="btn-s"><svg class="abs" style="left:13px;top:10px" width="16" height="16" viewBox="0 0 16 16"><path d="M1.700 1.700H11.300L14.300 4.700V14.300H1.700Z" fill="none" stroke="#fff" stroke-width="1.300"/><path d="M4.500 1.700V5.700H10.500V1.700" fill="none" stroke="#fff" stroke-width="1.300"/><path d="M8.600 2.600V4.600" stroke="#fff" stroke-width="1.300"/><path d="M4.500 14.300V9.500H11.500V14.300" fill="none" stroke="#fff" stroke-width="1.300"/></svg><span>Save</span></div>
  </div>
</div>

</div>
</body>
</html>
